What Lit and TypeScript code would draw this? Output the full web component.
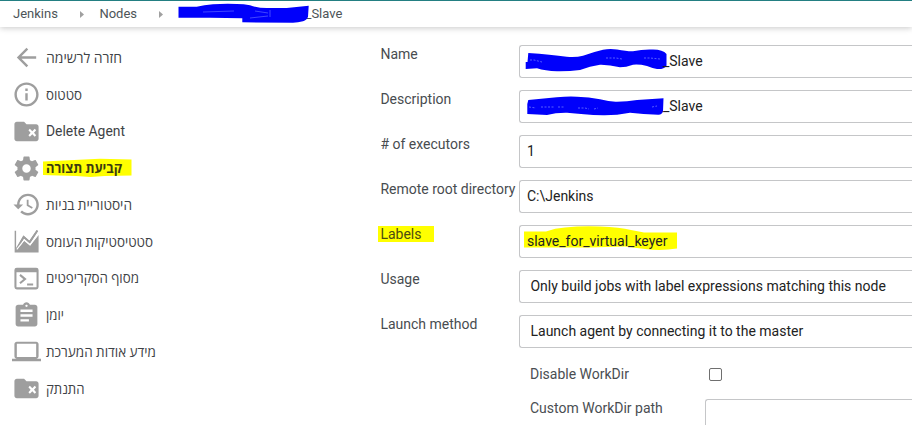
import { LitElement, html, css, svg, nothing, TemplateResult } from "lit";
import { customElement, property } from "lit/decorators.js";
import { classMap } from "lit/directives/class-map.js";

const folderX = svg`<path fill-rule="evenodd" d="M4 4h6l2 2h8c1.1 0 2 .9 2 2v10c0 1.1-.9 2-2 2H4c-1.1 0-2-.9-2-2V6c0-1.1.9-2 2-2zm9.600 6.900 1.800 2.100-1.800 2.100 1.200 1.200 2-2 2 2 1.200-1.200-1.800-2.100 1.800-2.100-1.200-1.200-2 2-2-2z"/>`;

const icons: Record<string, TemplateResult> = {
  back: svg`<path d="M20 11H7.83l5.59-5.59L12 4l-8 8 8 8 1.41-1.41L7.83 13H20v-2z"/>`,
  info: svg`<path d="M11 7h2v2h-2zm0 4h2v6h-2zm1-9C6.48 2 2 6.48 2 12s4.48 10 10 10 10-4.48 10-10S17.52 2 12 2zm0 18c-4.41 0-8-3.59-8-8s3.59-8 8-8 8 3.59 8 8-3.59 8-8 8z"/>`,
  folder: folderX,
  gear: svg`<path d="M19.43 12.98c.04-.32.07-.64.07-.98s-.03-.66-.07-.98l2.11-1.65c.19-.15.24-.42.12-.64l-2-3.46c-.12-.22-.39-.3-.61-.22l-2.49 1c-.52-.4-1.08-.73-1.69-.98l-.38-2.65C14.46 2.18 14.25 2 14 2h-4c-.25 0-.46.18-.49.42l-.38 2.65c-.61.25-1.17.59-1.69.98l-2.49-1c-.23-.09-.49 0-.61.22l-2 3.46c-.13.22-.07.49.12.64l2.11 1.65c-.04.32-.07.65-.07.98s.03.66.07.98l-2.11 1.65c-.19.15-.24.42-.12.64l2 3.46c.12.22.39.3.61.22l2.49-1c.52.4 1.08.73 1.69.98l.38 2.65c.03.24.24.42.49.42h4c.25 0 .46-.18.49-.42l.38-2.65c.61-.25 1.17-.59 1.69-.98l2.49 1c.23.09.49 0 .61-.22l2-3.46c.12-.22.07-.49-.12-.64l-2.11-1.65zM12 15.5c-1.93 0-3.5-1.57-3.5-3.5s1.57-3.5 3.5-3.5 3.5 1.57 3.5 3.5-1.57 3.5-3.5 3.5z"/>`,
  history: svg`<path transform="translate(-.3 0)" d="M13.5 3c-4.97 0-9 4.03-9 9h-3l3.9 3.9.1.1L9.5 12h-3c0-3.87 3.13-7 7-7s7 3.13 7 7-3.13 7-7 7c-1.93 0-3.68-.79-4.94-2.06l-1.42 1.42C8.77 19.99 11.02 21 13.5 21c4.97 0 9-4.03 9-9s-4.03-9-9-9zm-1 5v5l4.28 2.54.72-1.21-3.5-2.08V8h-1.5z"/>`,
  chart: svg`<path d="M2.2 3h1.2v14.4L9.4 7l5 4.3L20.4 2.6l1.2.8-6.8 10.4-4.9-4.2-5.5 10.2h-.6L9.9 11.4l5.1 4.2 7-9V21H2.2z"/><path class="line" d="M4 18.5 9.7 8.2l4.9 4.3 6.4-9.6" stroke-width="1.5"/><path d="M4 18.5 10.2 10.6l4.7 4L22 5.4" fill="none" stroke="#fff" stroke-width=".9"/>`,
  terminal: svg`<path fill-rule="evenodd" d="M4 3h16a2 2 0 0 1 2 2v14a2 2 0 0 1-2 2H4a2 2 0 0 1-2-2V5a2 2 0 0 1 2-2zM3.7 6.8v12.5h16.6V6.8z"/><path class="line" d="m6.6 9 4.2 3.5-4.2 3.5M12.5 17h5" stroke-width="1.7"/>`,
  clipboard: svg`<path d="M19 3h-4.18C14.4 1.84 13.3 1 12 1c-1.3 0-2.4.84-2.82 2H5c-1.1 0-2 .9-2 2v14c0 1.1.9 2 2 2h14c1.1 0 2-.9 2-2V5c0-1.1-.9-2-2-2zm-7 0c.55 0 1 .45 1 1s-.45 1-1 1-1-.45-1-1 .45-1 1-1zm2 14H7v-2h7v2zm3-4H7v-2h10v2zm0-4H7V7h10v2z"/>`,
  laptop: svg`<path d="M20 18c1.1 0 1.99-.9 1.99-2L22 6c0-1.1-.9-2-2-2H4c-1.1 0-2 .9-2 2v10c0 1.1.9 2 2 2H0v2h24v-2h-4zM4 5.6h16v11H4z"/>`,
};

interface Task {
  icon: string;
  text: string;
  width: number;
  rtl?: boolean;
  current?: boolean;
}

const tasks: Task[] = [
  { icon: "back", text: "חזרה לרשימה", width: 76, rtl: true },
  { icon: "info", text: "סטטוס", width: 36, rtl: true },
  { icon: "folder", text: "Delete Agent", width: 79 },
  { icon: "gear", text: "קביעת תצורה", width: 76, rtl: true, current: true },
  { icon: "history", text: "היסטוריית בניות", width: 86, rtl: true },
  { icon: "chart", text: "סטטיסטיקות העומס", width: 107, rtl: true },
  { icon: "terminal", text: "מסוף הסקריפטים", width: 93, rtl: true },
  { icon: "clipboard", text: "יומן", width: 18, rtl: true },
  { icon: "laptop", text: "מידע אודות המערכת", width: 110, rtl: true },
  { icon: "folder", text: "התנתק", width: 38.5, rtl: true },
];

@customElement("side-task")
class SideTask extends LitElement {
  @property({ attribute: false }) task!: Task;
  static styles = css`
    :host { display: flex; align-items: center; height: 36.75px; }
    .icon { width: 29px; height: 29px; flex: none; fill: #9e9e9e; margin-right: 5.2px; }
    .line { fill: none; stroke: #9e9e9e; }
    .text { white-space: nowrap; line-height: 20px; }
    .ink { display: block; height: 20px; overflow: visible; }
    .word { font-size: 14px; fill: #3f4347; }
    .bold { font-weight: 700; fill: #3c3c10; }
    .mark { fill: #ff0; }
  `;
  render() {
    const { icon, text, width, rtl, current } = this.task;
    return html`
      <svg class="icon" viewBox="0 0 24 24">${icons[icon]}</svg>
      <span class="text">
        <svg class="ink" width=${width} height="20">
          ${current ? svg`<path class="mark" d="M-3 3.500 28 2 54 .8 85.500 1.500v16l-27 .5-14 1L30 18l-18-.5-15-.5z"/>` : nothing}
          <text class=${classMap({ word: true, bold: !!current })} x=${rtl ? width : 0} y="14.6"
            direction=${rtl ? "rtl" : "ltr"} textLength=${width} lengthAdjust="spacingAndGlyphs">${text}</text>
        </svg>
      </span>`;
  }
}

interface Field {
  label: string;
  value: string;
  scribble?: TemplateResult;
  select?: boolean;
  marked?: boolean;
}

const fields: Field[] = [
  {
    label: "Name", value: "_Slave",
    scribble: svg`<path class="blue" d="M9.300 8Q32 9.500 47.700 11.700 57 12.500 64 10.700 74 7 84 4.700 91 3.500 98 4.500 108 6.500 114 6.300 124 4 134 4.500 144 4.500 147.500 9V20.700Q145 24.500 138 24 134 23.500 128 21 120 19 114 19.700 107 22.300 101 22.300 90 19.500 81 19.700 71 21 61 25 50 26.500 38 26.300 26 26 18 23.300L6.700 24V17H8.500z"/><path class="scratch" d="M11 15h4l8 2M87 13l10 0 6 1M125 13h6l10 1"/>`,
  },
  {
    label: "Description", value: "_Slave",
    scribble: svg`<path class="blue" d="M9.300 10 37.700 7.300Q50 6 58 6.700 70 7 81 9.300 91 12 98 11.700 108 11.500 118 10L144.500 8.300 144 21.300Q143 25 139 24.700 124 24 111 22.700 97 25.500 84 25.300 64 24.500 48 22.700 37 22.500 28 25L8.300 24V14z"/><path class="scratch" d="M10 17l7 1m5-1h14m3 0h7m13 1 7 0 4 1m5 0 4-1M133 17l5-1"/>`,
  },
  { label: "# of executors", value: "1" },
  { label: "Remote root directory", value: "C:\\Jenkins" },
  {
    label: "Labels", value: "slave_for_virtual_keyer", marked: true,
    scribble: svg`<path class="yellow" d="M5 6.500H27Q36 3 46 2.500 64 .5 81 1.500 101 2 112 5L125 7.500H158V23.500Q142 26 126 24L106 21.500 70 22.500H5z"/>`,
  },
  { label: "Usage", value: "Only build jobs with label expressions matching this node", select: true },
  { label: "Launch method", value: "Launch agent by connecting it to the master", select: true },
];

@customElement("form-field")
class FormField extends LitElement {
  @property({ attribute: false }) field!: Field;
  static styles = css`
    :host { display: grid; grid-template-columns: 138.6px 1fr; height: 45px; }
    .head { margin-top: -1px; }
    .label { line-height: 20px; color: #484c50; white-space: nowrap; }
    .marked { position: relative; isolation: isolate; color: #4b4b12; }
    .marked::before { content: ""; position: absolute; z-index: -1; left: -2px; top: 0; width: 56px; height: 16px; background: #ff0; }
    .box { position: relative; box-sizing: border-box; height: 33px; border: 1px solid #c5c6c8; border-right: 0; border-radius: 3px 0 0 3px; padding-left: 7px; line-height: 31px; color: #222; background: #fff; white-space: nowrap; }
    .select { padding-left: 10.5px; }
    .hidden { padding-left: 143px; }
    .over { position: absolute; left: -1px; top: -1px; width: 180px; height: 33px; overflow: visible; }
    .value { position: relative; }
    .blue { fill: #0000fb; }
    .scratch { fill: none; stroke: #7d86ff; stroke-width: .7; stroke-dasharray: 2 1.5; }
    .yellow { fill: #ff0; }
  `;
  render() {
    const f = this.field;
    return html`
      <div class="head"><span class=${classMap({ label: true, marked: !!f.marked })}>${f.label}</span></div>
      <div class=${classMap({ box: true, select: !!f.select, hidden: !!f.scribble && !f.marked })}>
        ${f.scribble ? html`<svg class="over">${f.scribble}</svg>` : nothing}
        <span class="value">${f.value}</span>
      </div>`;
  }
}

@customElement("app-root")
class AppRoot extends LitElement {
  static styles = css`
    :host { display: flex; flex-direction: column; box-sizing: border-box; height: 425px; overflow: hidden; background: #fff; font: 14px/20px Roboto, "Open Sans", sans-serif; color: #4a4e52; }
    .crumbs { position: relative; flex: none; display: flex; align-items: center; box-sizing: border-box; height: 27px; border-top: 1px solid #237f82; padding: 0 0 0 13px; font-size: 13px; color: #4d5458; background: #fff; box-shadow: 0 1px 6px #00000038; }
    .arrow { width: 4px; height: 7px; fill: #a0a0a0; }
    .first { margin: 1px 15.5px 0 22px; }
    .second { margin: 1px 142.5px 0 22px; }
    .cover { position: absolute; left: 178px; top: 1px; width: 132px; height: 22px; }
    .blue { fill: #0000fb; }
    .scratch { fill: none; stroke: #6c76ff; stroke-width: .6; }
    .main { display: grid; grid-template-columns: 380.4px 1fr; flex: 1; min-height: 0; }
    .tasks { padding: 12.5px 0 0 12px; }
    .form { padding-top: 18px; }
    .nested { padding: 4px 0 0 149.6px; }
    .row { display: grid; grid-template-columns: 175px 1fr; height: 34px; white-space: nowrap; }
    .check { appearance: none; box-sizing: border-box; width: 13px; height: 13px; margin: 4px 0 0 4px; border: 1px solid #6f6f6f; border-radius: 2px; background: #fff; }
    .path { box-sizing: border-box; height: 33px; margin-top: 1px; border: 1px solid #c5c6c8; border-right: 0; border-radius: 3px 0 0 0; }
  `;
  render() {
    const arrow = (cls: string) => html`<svg class="arrow ${cls}" viewBox="0 0 4 7"><path d="M0 0l4 3.5L0 7z" /></svg>`;
    return html`
      <nav class="crumbs">
        <span>Jenkins</span>${arrow("first")}<span>Nodes</span>${arrow("second")}<span>_Slave</span>
        <svg class="cover"><path class="blue" d="M.5 4.700H18.700Q26 3 35 2.300 47 1.500 58.700 2 66 2 72 3.300 80 6 88.700 6H108.700L130.700 3.700 130 14.700Q129 18 125 19.300 120 20.700 115 20.700L64.300 20.300V16.300L32 15.700H.5z"/><path class="scratch" d="M25 10l31-1M77 9l13 2M72 16l18-2M92 8v7"/></svg>
      </nav>
      <div class="main">
        <aside class="tasks">${tasks.map((t) => html`<side-task .task=${t}></side-task>`)}</aside>
        <section class="form">
          ${fields.map((f) => html`<form-field .field=${f}></form-field>`)}
          <div class="nested">
            <div class="row"><span>Disable WorkDir</span><input class="check" type="checkbox" /></div>
            <div class="row"><span>Custom WorkDir path</span><div class="path"></div></div>
          </div>
        </section>
      </div>`;
  }
}
